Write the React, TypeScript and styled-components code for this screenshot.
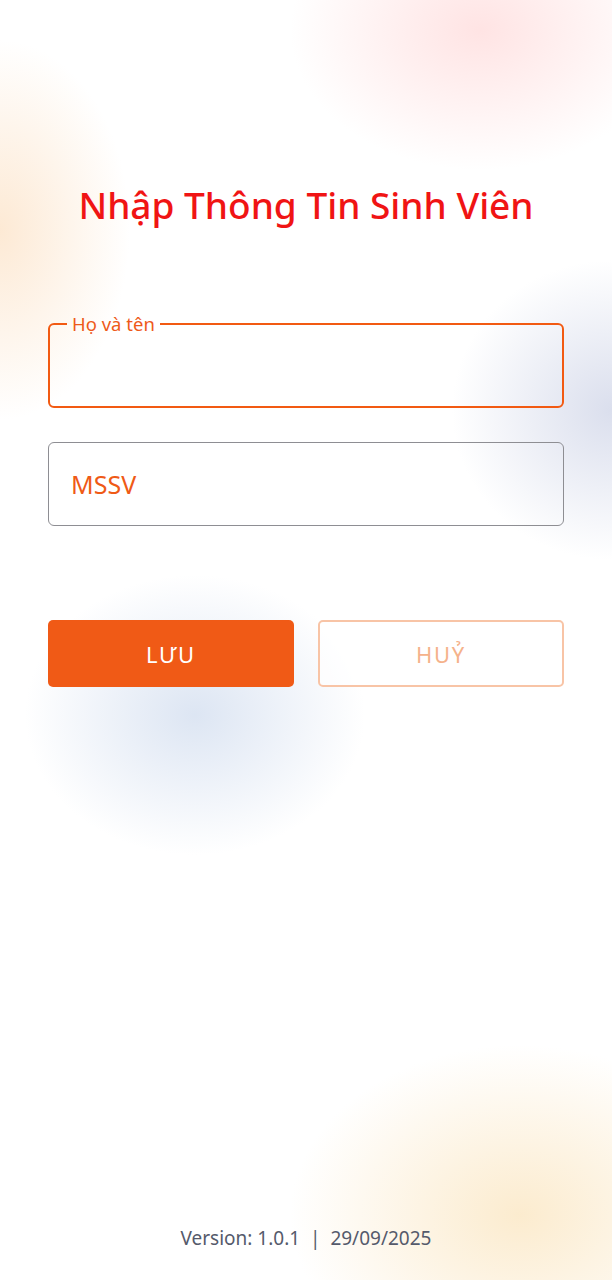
import React from "react";
import styled, { createGlobalStyle } from "styled-components";

const Global = createGlobalStyle`
  html, body { margin: 0; padding: 0; }
  body {
    font-family: "Noto Sans", "Open Sans", sans-serif;
    background: #ffffff;
  }
`;

const Page = styled.div`
  position: relative;
  width: 612px;
  min-height: 1280px;
  box-sizing: border-box;
  overflow: hidden;
  display: flex;
  flex-direction: column;
  padding: 0 48px;
  background:
    radial-gradient(ellipse 190px 140px at 480px 30px, rgba(255, 216, 216, 0.7), rgba(255, 216, 216, 0) 100%),
    radial-gradient(ellipse 130px 190px at 0px 230px, rgba(252, 226, 198, 0.75), rgba(252, 226, 198, 0) 100%),
    radial-gradient(ellipse 160px 150px at 612px 410px, rgba(212, 217, 234, 0.85), rgba(212, 217, 234, 0) 100%),
    radial-gradient(ellipse 170px 140px at 195px 715px, rgba(212, 223, 240, 0.8), rgba(212, 223, 240, 0) 100%),
    radial-gradient(ellipse 230px 170px at 520px 1215px, rgba(251, 232, 198, 0.85), rgba(251, 232, 198, 0) 100%),
    #ffffff;
`;

const Title = styled.h1`
  margin: 180px 0 0;
  text-align: center;
  color: #f01414;
  font-size: 37px;
  font-weight: 500;
  line-height: 50px;
`;

const Form = styled.div`
  display: flex;
  flex-direction: column;
  gap: 34px;
  margin-top: 83px;
`;

const Field = styled.fieldset<{ $active?: boolean }>`
  margin: 0;
  min-width: 0;
  box-sizing: border-box;
  border-radius: 6px;
  border: ${(p) => (p.$active ? "2.5px solid #f25a12" : "1.5px solid #8e8e93")};
  padding: 0 22px;
  background: transparent;
`;

const Legend = styled.legend`
  padding: 0 5px;
  margin-left: -5px;
  color: #ee5a1a;
  font-size: 18.5px;
  line-height: 22px;
`;

const FieldBody = styled.div<{ $h: number }>`
  height: ${(p) => p.$h}px;
  display: flex;
  align-items: center;
`;

const Placeholder = styled.span`
  color: #ef5a16;
  font-size: 25px;
  line-height: 30px;
`;

const Actions = styled.div`
  display: grid;
  grid-template-columns: 1fr 1fr;
  gap: 24px;
  margin-top: 94px;
`;

const Button = styled.button<{ $primary?: boolean }>`
  height: 67px;
  border-radius: 5px;
  font-family: "Noto Sans", sans-serif;
  font-size: 22px;
  letter-spacing: 1.8px;
  cursor: pointer;
  background: ${(p) => (p.$primary ? "#f05a16" : "rgba(255,255,255,0.6)")};
  color: ${(p) => (p.$primary ? "#ffffff" : "#f5b28b")};
  border: ${(p) => (p.$primary ? "none" : "2px solid #f8c4a6")};
`;

const Spacer = styled.div`
  flex: 1;
`;

const Footer = styled.div`
  text-align: center;
  color: #555a6b;
  font-size: 19px;
  line-height: 24px;
  margin-bottom: 30px;
`;

export default function App() {
  return (
    <>
      <Global />
      <Page>
        <Title>Nhập Thông Tin Sinh Viên</Title>
        <Form>
          <Field $active>
            <Legend>Họ và tên</Legend>
            <FieldBody $h={71} />
          </Field>
          <Field>
            <FieldBody $h={82}>
              <Placeholder>MSSV</Placeholder>
            </FieldBody>
          </Field>
        </Form>
        <Actions>
          <Button $primary>LƯU</Button>
          <Button>HUỶ</Button>
        </Actions>
        <Spacer />
        <Footer>Version: 1.0.1&nbsp;&nbsp;|&nbsp;&nbsp;29/09/2025</Footer>
      </Page>
    </>
  );
}
